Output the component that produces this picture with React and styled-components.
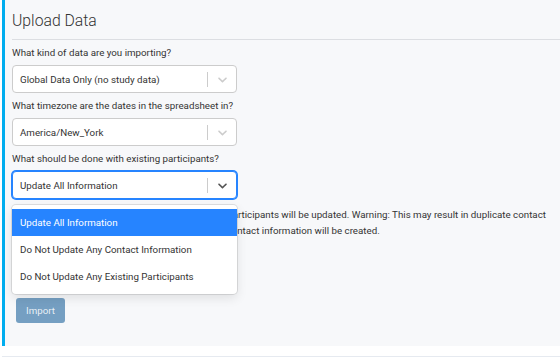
import React from "react";
import styled, { createGlobalStyle } from "styled-components";

const GlobalStyle = createGlobalStyle`
  html, body { margin: 0; padding: 0; background: #ffffff; }
  body { font-family: Roboto, "Liberation Sans", Arial, sans-serif; color: #333333; }
  * { box-sizing: border-box; }
`;

const Page = styled.div`
  width: 560px;
  height: 358px;
  overflow: hidden;
  padding-left: 2px;
  background: #ffffff;
`;

const Panel = styled.section`
  height: 346px;
  background: #f7f8fa;
  border-left: 3px solid #00adef;
  padding: 11px 8px 0 7px;
  display: flex;
  flex-direction: column;
`;

const Title = styled.h1`
  margin: 0;
  font-size: 15.75px;
  line-height: 19px;
  font-weight: 300;
  color: #333333;
`;

const Rule = styled.hr`
  margin: 9px -8px 0 0;
  border: 0;
  border-top: 1px solid #dcdee2;
`;

const Field = styled.div`
  position: relative;
  display: flex;
  flex-direction: column;
  gap: 6px;
  margin-top: 6px;
  width: 225px;
`;

const Label = styled.label`
  font-size: 9.75px;
  line-height: 13px;
  color: #333333;
  white-space: nowrap;
`;

const Control = styled.div`
  height: 28px;
  display: flex;
  align-items: center;
  background: #ffffff;
  border: 1px solid ${(p) => (p.$focused ? "#2684ff" : "#cccccc")};
  box-shadow: ${(p) => (p.$focused ? "0 0 0 1px #2684ff" : "none")};
  border-radius: 4px;
`;

const Value = styled.div`
  flex: 1;
  padding-left: 7px;
  font-size: 9.75px;
  color: #333333;
  white-space: nowrap;
`;

const Separator = styled.span`
  width: 1px;
  height: 15px;
  background: #cccccc;
`;

const Indicator = styled.div`
  width: 28px;
  display: flex;
  align-items: center;
  justify-content: center;
  color: ${(p) => (p.$focused ? "#555555" : "#cccccc")};
`;

const Menu = styled.div`
  position: absolute;
  left: 0;
  top: 100%;
  margin-top: 6px;
  width: 225px;
  background: #ffffff;
  border-radius: 4px;
  padding: 4px 0;
  box-shadow: 0 0 0 1px rgba(0, 0, 0, 0.1), 0 4px 11px rgba(0, 0, 0, 0.1);
  z-index: 2;
`;

const Option = styled.div`
  height: 27px;
  display: flex;
  align-items: center;
  padding-left: 8px;
  font-size: 9.75px;
  white-space: nowrap;
  background: ${(p) => (p.$selected ? "#2684ff" : "#ffffff")};
  color: ${(p) => (p.$selected ? "#ffffff" : "#333333")};
`;

const Description = styled.p`
  margin: 8px 0 0 0;
  font-size: 9.75px;
  line-height: 16px;
  color: #333333;
`;

const ImportButton = styled.button`
  margin: 59px 0 0 4px;
  width: 49px;
  height: 25px;
  border: 0;
  border-radius: 3px;
  background: #759fc2;
  color: rgba(255, 255, 255, 0.85);
  font-family: inherit;
  font-size: 9.75px;
  padding: 0;
  align-self: flex-start;
`;

const Footer = styled.div`
  margin-top: 10px;
  height: 2px;
  border-top: 1px solid #e6eaf0;
`;

const Chevron = () => (
  <svg width="15" height="15" viewBox="0 0 20 20" fill="currentColor" aria-hidden="true">
    <path d="M4.516 7.548c0.436-0.446 1.043-0.481 1.576 0l3.908 3.747 3.908-3.747c0.533-0.481 1.141-0.446 1.574 0 0.436 0.445 0.408 1.197 0 1.615-0.406 0.418-4.695 4.502-4.695 4.502-0.217 0.223-0.502 0.335-0.787 0.335s-0.57-0.112-0.789-0.335c0 0-4.287-4.084-4.695-4.502s-0.436-1.17 0-1.615z" />
  </svg>
);

const Select = ({ value, focused, options, selected }) => (
  <>
    <Control $focused={focused}>
      <Value>{value}</Value>
      <Separator />
      <Indicator $focused={focused}>
        <Chevron />
      </Indicator>
    </Control>
    {options && (
      <Menu>
        {options.map((o) => (
          <Option key={o} $selected={o === selected}>
            {o}
          </Option>
        ))}
      </Menu>
    )}
  </>
);

const participantOptions = [
  "Update All Information",
  "Do Not Update Any Contact Information",
  "Do Not Update Any Existing Participants",
];

export default function App() {
  return (
    <>
      <GlobalStyle />
      <Page>
        <Panel>
          <Title>Upload Data</Title>
          <Rule />
          <Field>
            <Label>What kind of data are you importing?</Label>
            <Select value="Global Data Only (no study data)" />
          </Field>
          <Field>
            <Label>What timezone are the dates in the spreadsheet in?</Label>
            <Select value="America/New_York" />
          </Field>
          <Field>
            <Label>What should be done with existing participants?</Label>
            <Select
              value="Update All Information"
              focused
              options={participantOptions}
              selected="Update All Information"
            />
          </Field>
          <Description>
            Update All Information: all information of existing participants will be updated. Warning: This may result in duplicate contact
            information records. Otherwise, no new duplicate contact information will be created.
          </Description>
          <ImportButton disabled>Import</ImportButton>
        </Panel>
        <Footer />
      </Page>
    </>
  );
}
